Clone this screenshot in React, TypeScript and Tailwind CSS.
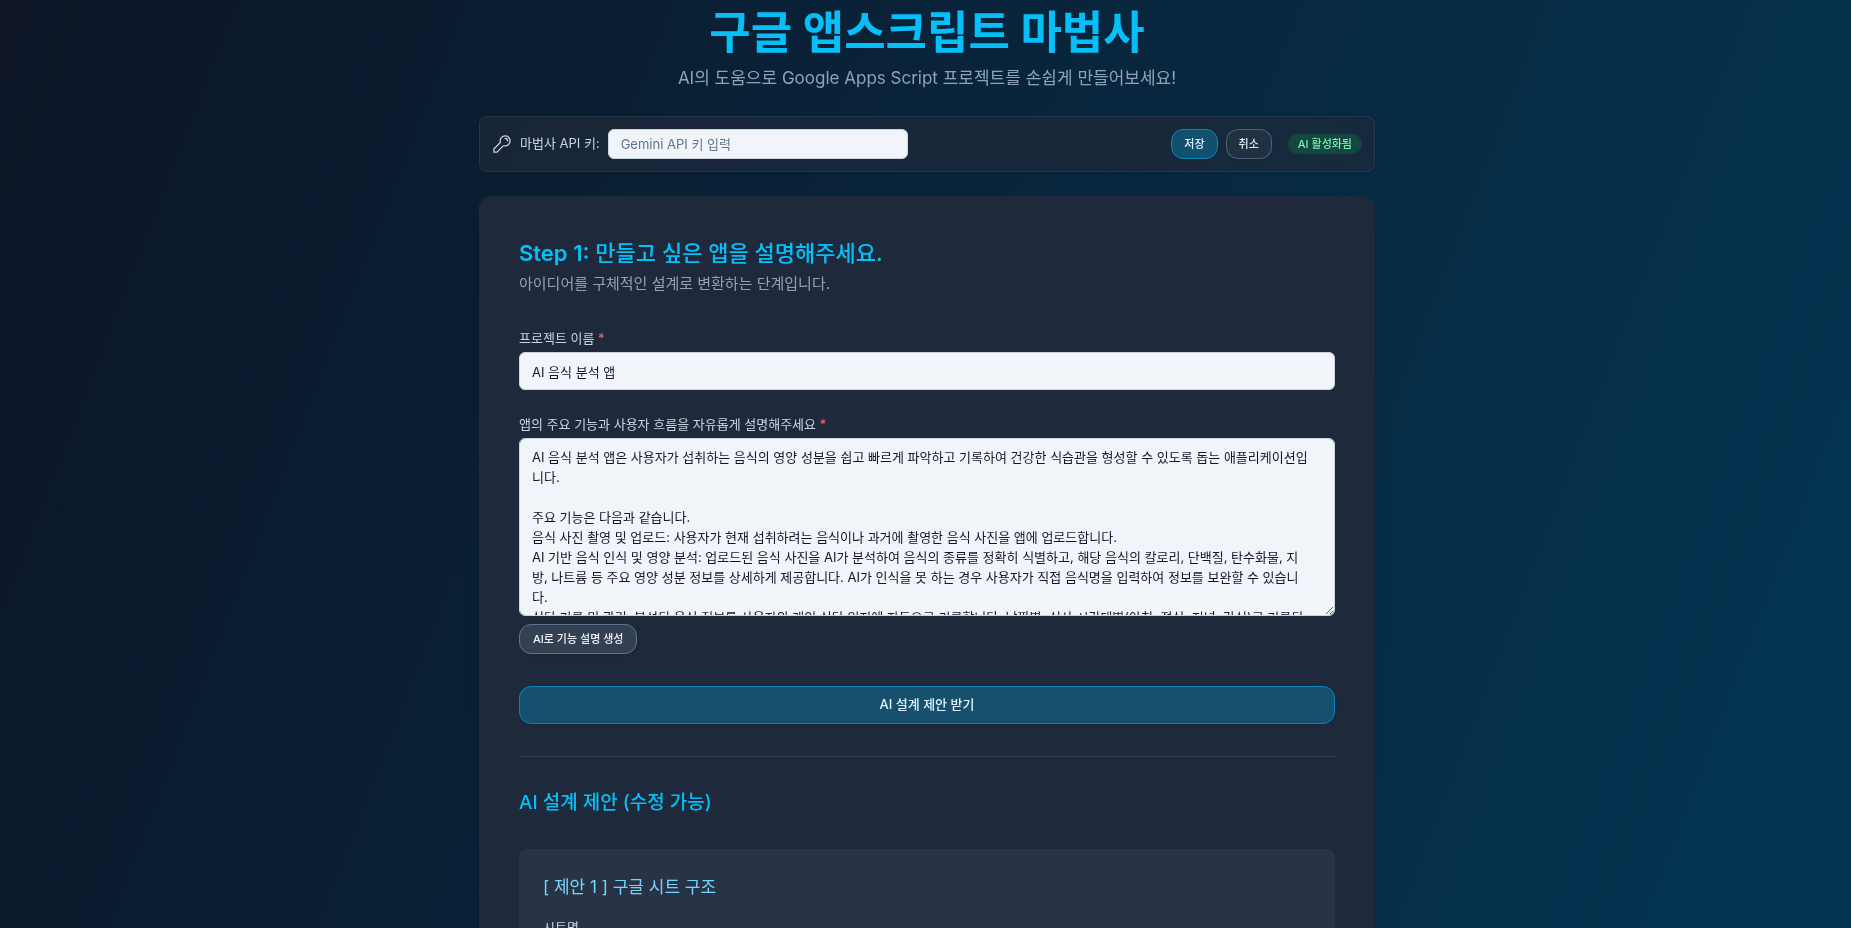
import React from 'react';

const description = `AI 음식 분석 앱은 사용자가 섭취하는 음식의 영양 성분을 쉽고 빠르게 파악하고 기록하여 건강한 식습관을 형성할 수 있도록 돕는 애플리케이션입니다.

주요 기능은 다음과 같습니다.
음식 사진 촬영 및 업로드: 사용자가 현재 섭취하려는 음식이나 과거에 촬영한 음식 사진을 앱에 업로드합니다.
AI 기반 음식 인식 및 영양 분석: 업로드된 음식 사진을 AI가 분석하여 음식의 종류를 정확히 식별하고, 해당 음식의 칼로리, 단백질, 탄수화물, 지방, 나트륨 등 주요 영양 성분 정보를 상세하게 제공합니다. AI가 인식을 못 하는 경우 사용자가 직접 음식명을 입력하여 정보를 보완할 수 있습니다.
식단 기록 및 관리: 분석된 음식 정보를 사용자의 개인 식단 일지에 자동으로 기록합니다. 날짜별, 식사 시간대별(아침, 점심, 저녁, 간식)로 기록된 식단을 확인할 수 있습니다.`;

export default function App() {
  return (
    <div className="h-screen overflow-hidden bg-[linear-gradient(111deg,#0d1526,#033653)] pl-[3px] font-['Inter','Noto_Sans_CJK_KR',sans-serif] text-slate-200">
      <div className="mx-auto max-w-4xl">
        <header className="mb-6 pt-2 text-center">
          <h1 className="text-[45px] leading-[50px] font-bold text-[#06bff8]">구글 앱스크립트 마법사</h1>
          <p className="mt-1.5 text-[17px] leading-7 text-slate-400">AI의 도움으로 Google Apps Script 프로젝트를 손쉽게 만들어보세요!</p>
        </header>

        <section className="mb-6 flex items-center gap-2 rounded-lg border border-slate-700/60 bg-[#1e293b]/70 p-3 shadow-sm">
          <svg className="size-5 text-slate-300" viewBox="0 0 24 24" fill="none" stroke="currentColor" strokeWidth="1.5" strokeLinecap="round" strokeLinejoin="round" aria-hidden="true">
            <path d="M15.75 5.25a3 3 0 0 1 3 3m3 0a6 6 0 0 1-7.03 5.91c-.56-.1-1.16.03-1.56.43L6 21.75H2.25v-3.75l7.16-7.16c.4-.4.53-1 .43-1.56A6 6 0 1 1 21.75 8.25Z" />
          </svg>
          <label htmlFor="api-key" className="text-[13px] text-slate-300">마법사 API 키:</label>
          <input id="api-key" type="password" placeholder="Gemini API 키 입력" className="h-[30px] w-[300px] rounded-md border border-slate-300 bg-slate-100 px-3 text-[13px] placeholder:text-slate-500" />
          <div className="ml-auto flex items-center gap-2">
            <button className="h-[30px] rounded-xl border border-[#0b85b5] bg-[#12506f] px-3 text-[11px] font-medium text-sky-100 shadow-sm">저장</button>
            <button className="h-[30px] rounded-xl border border-slate-500/70 bg-[#223044] px-3 text-[11px] font-medium text-slate-200 shadow-sm">취소</button>
            <span className="ml-2 rounded-full bg-[#134742] px-2.5 py-0.5 text-[11px] leading-4 font-medium text-green-300">AI 활성화됨</span>
          </div>
        </section>

        <main className="rounded-xl bg-[#1e293b] p-10 shadow-xl">
          <h2 className="text-[22px] leading-[34px] font-medium text-[#06bff8]"><span className="font-semibold">Step 1:</span> 만들고 싶은 앱을 설명해주세요.</h2>
          <p className="mt-0.5 text-[15px] leading-6 text-slate-400">아이디어를 구체적인 설계로 변환하는 단계입니다.</p>

          <div className="mt-8">
            <label htmlFor="project-name" className="mb-1 block text-[13px] leading-5 text-slate-300">프로젝트 이름 <span className="text-red-400">*</span></label>
            <input id="project-name" defaultValue="AI 음식 분석 앱" className="block h-[38px] w-full rounded-md border border-slate-300 bg-slate-100 px-3 text-[13px] text-slate-900" />
          </div>

          <div className="mt-6">
            <label htmlFor="description" className="mb-1 block text-[13px] leading-5 text-slate-300">앱의 주요 기능과 사용자 흐름을 자유롭게 설명해주세요 <span className="text-red-400">*</span></label>
            <textarea id="description" defaultValue={description} className="block h-[178px] w-full rounded-md border border-slate-300 bg-slate-100 py-2 pr-6 pl-3 text-[13px] leading-5 text-slate-900 [scrollbar-width:none]" />
            <button className="mt-2 h-[30px] rounded-xl border border-slate-500 bg-[#344152] px-[13px] text-[11px] font-medium text-slate-100 shadow-sm">AI로 기능 설명 생성</button>
          </div>

          <button className="mt-8 block h-[38px] w-full rounded-xl border border-[#0b85b5] bg-[#17506e] text-[13px] font-medium text-sky-100 shadow-sm">AI 설계 제안 받기</button>

          <section className="mt-8 border-t border-slate-700 pt-8">
            <h3 className="text-[19px] leading-7 font-medium text-[#06bff8]">AI 설계 제안 (수정 가능)</h3>
            <div className="mt-8 rounded-lg bg-[#283446] p-6">
              <h4 className="text-[17px] leading-7 text-sky-300">[ 제안 1 ] 구글 시트 구조</h4>
              <label htmlFor="sheet-name" className="mt-4 mb-1 block text-[13px] leading-5 text-slate-300">시트명</label>
              <input id="sheet-name" className="block h-[38px] w-full rounded-md border border-slate-300 bg-slate-100 px-3 text-[13px] text-slate-900" />
            </div>
          </section>
        </main>
      </div>
    </div>
  );
}
